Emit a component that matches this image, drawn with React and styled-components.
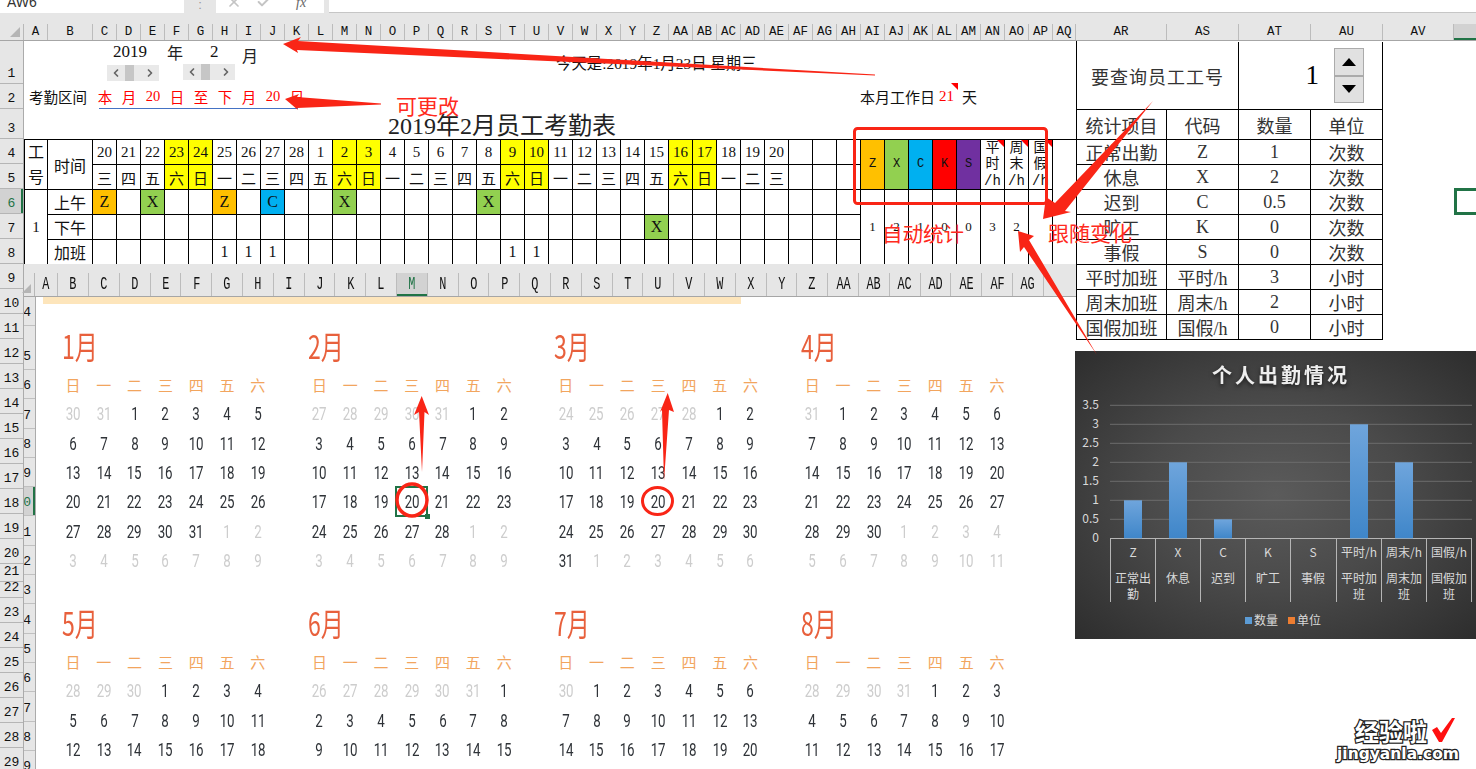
import React from 'react';
import styled, { createGlobalStyle } from 'styled-components';
import { X, Check, ChevronLeft, ChevronRight } from 'lucide-react';

const CJK = '"Noto Sans CJK SC"';
const SONG = `"Liberation Serif", ${CJK}, serif`;
const MONO = `"Liberation Mono", ${CJK}, monospace`;
const RED = '#f92516';
const GREEN = '#217346';

const columnName = (i) => {
  const letter = String.fromCharCode(65 + (i % 26));
  return i < 26 ? letter : 'A' + letter;
};

const WEEK = ['日', '一', '二', '三', '四', '五', '六'];
const DAYS = [20, 21, 22, 23, 24, 25, 26, 27, 28, 1, 2, 3, 4, 5, 6, 7, 8, 9, 10, 11, 12, 13, 14, 15, 16, 17, 18, 19, 20];
const WEEKEND = [3, 4, 10, 11, 17, 18, 24, 25];
const CODE_COLORS = { Z: '#ffc000', X: '#92d050', C: '#00b0f0' };

const SHIFTS = [
  { name: '上午', marks: { 0: 'Z', 2: 'X', 5: 'Z', 7: 'C', 10: 'X', 16: 'X' } },
  { name: '下午', marks: { 23: 'X' } },
  { name: '加班', marks: { 5: 1, 6: 1, 7: 1, 17: 1, 18: 1 } },
];

const SUMMARY = [
  { code: 'Z', bg: '#ffc000', value: 1 },
  { code: 'X', bg: '#92d050', value: 2 },
  { code: 'C', bg: '#00b0f0', value: 1 },
  { code: 'K', bg: '#ff0000', value: 0 },
  { code: 'S', bg: '#7030a0', value: 0 },
  { code: '平时/h', value: 3 },
  { code: '周末/h', value: 2 },
  { code: '国假/h', value: '' },
];

const STATS = [
  ['正常出勤', 'Z', '1', '次数'],
  ['休息', 'X', '2', '次数'],
  ['迟到', 'C', '0.5', '次数'],
  ['旷工', 'K', '0', '次数'],
  ['事假', 'S', '0', '次数'],
  ['平时加班', '平时/h', '3', '小时'],
  ['周末加班', '周末/h', '2', '小时'],
  ['国假加班', '国假/h', '0', '小时'],
];

const TOP_ROWS = [
  [1, 43], [2, 25], [3, 30], [4, 25], [5, 25], [6, 25], [7, 25], [8, 25], [9, 25], [10, 25],
  [11, 25], [12, 25], [13, 25], [14, 25], [15, 25], [16, 25], [17, 25], [18, 25], [19, 25], [20, 25],
  [21, 18], [22, 16], [23, 25], [24, 25], [25, 25], [26, 25], [27, 25], [28, 25], [29, 25],
];

const PANE_ROWS = [[14, 29], [15, 44], ...Array.from({ length: 14 }, (_, i) => [16 + i, 29.3])];

const CHART = [
  { code: 'Z', label: ['正常出', '勤'], value: 1, left: 35 },
  { code: 'X', label: ['休息'], value: 2, left: 80 },
  { code: 'C', label: ['迟到'], value: 0.5, left: 125 },
  { code: 'K', label: ['旷工'], value: 0, left: 170 },
  { code: 'S', label: ['事假'], value: 0, left: 215 },
  { code: '平时/h', label: ['平时加', '班'], value: 3, left: 261 },
  { code: '周末/h', label: ['周末加', '班'], value: 2, left: 306 },
  { code: '国假/h', label: ['国假加', '班'], value: 0, left: 351 },
];

const monthCells = (month) => {
  const first = new Date(2019, month, 1);
  const start = 1 - first.getDay();
  return Array.from({ length: 42 }, (_, i) => {
    const d = new Date(2019, month, start + i);
    return { day: d.getDate(), muted: d.getMonth() !== month };
  });
};

const GlobalStyle = createGlobalStyle`
  html, body { margin: 0; padding: 0; background: #fff; }
  * { box-sizing: border-box; }
`;

const Page = styled.div`
  position: relative;
  width: 1476px;
  height: 769px;
  overflow: hidden;
  background: #fff;
  color: #111;
  font-family: ${SONG};
`;

const FormulaBar = styled.div`
  display: flex;
  height: 24px;
  padding-bottom: 11px;
  background: #e6e6e6;
`;

const NameBox = styled.div`
  width: 184px;
  background: #fff;
  overflow: hidden;
  padding-left: 7px;
  font: 14px/4px "Liberation Sans", sans-serif;
  color: #333;
`;

const BarDots = styled.div`
  width: 32px;
  text-align: center;
  color: #999;
  font: 13px/10px "Liberation Sans", sans-serif;
`;

const IconBox = styled.div`
  display: flex;
  align-items: flex-start;
  width: 108px;
  background: #fff;
  overflow: hidden;
  padding-left: 10px;
  gap: 14px;
  color: #c4c4c4;
  svg {
    margin-top: -6px;
  }
`;

const FxMark = styled.span`
  margin-left: 10px;
  font: italic 14px/6px "Liberation Serif", serif;
  color: #666;
`;

const FormulaInput = styled.div`
  flex: 1;
  margin-left: 5px;
  background: #fff;
  border-bottom: 1px solid #c6c6c6;
`;

const HeaderRow = styled.div`
  display: flex;
  height: 17px;
  background: #e6e6e6;
  border-bottom: 1px solid #a6a6a6;
`;

const Corner = styled.div`
  position: relative;
  flex: 0 0 ${(p) => p.$width}px;
  border-right: 1px solid #b8b8b8;
  &::after {
    content: '';
    position: absolute;
    right: 3px;
    bottom: 3px;
    border-style: solid;
    border-width: 0 0 ${(p) => p.$size}px ${(p) => p.$size}px;
    border-color: transparent transparent #b5b5b5 transparent;
  }
`;

const ColumnHead = styled.div`
  flex: 0 0 ${(p) => p.$width}px;
  display: flex;
  align-items: center;
  justify-content: center;
  border-right: 1px solid #bcbcbc;
  background: ${(p) => (p.$active ? '#d2d2d2' : 'transparent')};
  box-shadow: ${(p) => (p.$active ? `inset 0 -2px 0 ${GREEN}` : 'none')};
  font: 12.5px ${MONO};
  color: #111;
`;

const Body = styled.div`
  display: flex;
  height: 728px;
`;

const RowHeader = styled.div`
  flex: 0 0 24px;
  background: #e6e6e6;
  border-right: 1px solid #ababab;
`;

const RowHead = styled.div`
  display: flex;
  align-items: flex-end;
  justify-content: center;
  height: ${(p) => p.$height}px;
  padding-bottom: 1px;
  border-bottom: 1px solid #b5b5b5;
  background: ${(p) => (p.$active ? '#d2d2d2' : 'transparent')};
  box-shadow: ${(p) => (p.$active ? `inset -2px 0 0 ${GREEN}` : 'none')};
  color: ${(p) => (p.$active ? GREEN : '#111')};
  font: 13px/16px ${MONO};
`;

const SheetColumn = styled.div`
  flex: 0 0 1052px;
  display: flex;
  flex-direction: column;
`;

const TitleRow = styled.div`
  display: flex;
  align-items: flex-start;
  height: 43px;
  padding-left: 83px;
`;

const ScrollGroup = styled.div`
  display: flex;
  flex-direction: column;
  width: 52px;
`;

const ScrollValue = styled.div`
  height: 22px;
  padding-left: ${(p) => p.$indent}px;
  font: 17px/22px "Liberation Serif", serif;
`;

const ScrollControl = styled.div`
  display: flex;
  align-items: center;
  height: 16px;
  margin-top: ${(p) => p.$top}px;
  background: #e9e9e9;
  color: #666;
`;

const ScrollArrow = styled.div`
  flex: 0 0 18px;
  display: flex;
  align-items: center;
  justify-content: center;
`;

const ScrollThumb = styled.div`
  flex: 0 0 9px;
  height: 16px;
  background: #c6c6c6;
`;

const ScrollGap = styled.div`
  flex: 1;
`;

const UnitLabel = styled.div`
  margin: ${(p) => p.$top}px 0 0 ${(p) => p.$left}px;
  font: 16px/22px ${CJK};
  color: #222;
`;

const TodayText = styled.div`
  margin: 13px 0 0 298px;
  white-space: nowrap;
  font: 15.4px/20px ${SONG};
`;

const PeriodRow = styled.div`
  display: flex;
  align-items: center;
  height: 25px;
  padding-left: 5px;
  font-size: 14.5px;
`;

const PeriodLabel = styled.div`
  flex: 0 0 64px;
  white-space: nowrap;
`;

const PeriodDates = styled.div`
  position: relative;
  flex: 0 0 216px;
  display: grid;
  grid-template-columns: repeat(9, 24px);
  height: 25px;
  align-items: center;
  text-align: center;
  color: #ff0000;
  &::after {
    content: '';
    position: absolute;
    left: 6px;
    bottom: 0;
    width: 199px;
    height: 1px;
    background: #4472c4;
  }
`;

const WorkDays = styled.div`
  display: flex;
  align-items: center;
  margin-left: 551px;
  white-space: nowrap;
  font-size: 15px;
`;

const WorkCount = styled.span`
  position: relative;
  width: 27px;
  padding-left: 4px;
  color: #ff0000;
  &::after {
    content: '';
    position: absolute;
    right: 4px;
    top: -5px;
    border-style: solid;
    border-width: 0 7px 7px 0;
    border-color: transparent #ff0000 transparent transparent;
  }
`;

const SheetTitle = styled.div`
  height: 30px;
  padding: 3px 0 0 364px;
  white-space: nowrap;
  font: 24px/28px ${SONG};
  color: #222;
`;

const Attendance = styled.div`
  display: grid;
  grid-template-columns: 23px 45px repeat(40, 24px);
  grid-auto-rows: 25px;
  height: 125px;
  overflow: hidden;
  border-top: 1px solid #000;
  border-left: 1px solid #000;
`;

const Cell = styled.div`
  position: relative;
  display: flex;
  align-items: center;
  justify-content: center;
  grid-row: span ${(p) => p.$rows || 1};
  min-width: 0;
  overflow: hidden;
  text-align: center;
  border-right: 1px solid #000;
  border-bottom: 1px solid #000;
  background: ${(p) => p.$bg || 'transparent'};
  font-size: ${(p) => p.$size || 15}px;
  line-height: ${(p) => p.$line || 'normal'};
`;

const StackedText = styled.span`
  width: 1em;
`;

const SummaryLines = styled.span`
  white-space: nowrap;
`;

const SummaryHead = styled(Cell)`
  font-family: ${MONO};
  &::after {
    content: '';
    display: ${(p) => (p.$note ? 'block' : 'none')};
    position: absolute;
    top: 0;
    right: 0;
    border-style: solid;
    border-width: 0 7px 7px 0;
    border-color: transparent #ff0000 transparent transparent;
  }
`;

const PastedPane = styled.div`
  flex: 1;
  display: flex;
  flex-direction: column;
  min-height: 0;
`;

const PaneHeader = styled.div`
  display: flex;
  align-items: stretch;
  height: 33px;
  padding-top: 9px;
  background: #e6e6e6;
  border-bottom: 1px solid #a6a6a6;
`;

const PaneColumn = styled.div`
  flex: 0 0 ${(p) => p.$width}px;
  display: flex;
  align-items: center;
  justify-content: center;
  border-right: 1px solid #bcbcbc;
  background: ${(p) => (p.$active ? '#d2d2d2' : 'transparent')};
  box-shadow: ${(p) => (p.$active ? `inset 0 -2px 0 ${GREEN}` : 'none')};
  color: ${(p) => (p.$active ? GREEN : '#111')};
  font: 12.5px ${MONO};
`;

const StretchedLetter = styled.span`
  display: inline-block;
  transform: scale(0.95, 1.4);
`;

const PaneBody = styled.div`
  flex: 1;
  display: flex;
  min-height: 0;
`;

const PaneRows = styled.div`
  flex: 0 0 12px;
  width: 12px;
  min-width: 0;
  background: #e6e6e6;
  border-right: 1px solid #ababab;
`;

const PaneRow = styled.div`
  display: flex;
  align-items: flex-end;
  justify-content: flex-end;
  overflow: hidden;
  height: ${(p) => p.$height}px;
  padding: 0 4px 2px 0;
  border-bottom: 1px solid #c0c0c0;
  background: ${(p) => (p.$active ? '#d2d2d2' : 'transparent')};
  box-shadow: ${(p) => (p.$active ? `inset -2px 0 0 ${GREEN}` : 'none')};
  color: ${(p) => (p.$active ? GREEN : '#111')};
  font: 13px/20px ${MONO};
`;

const CalendarArea = styled.div`
  flex: 1;
  display: flex;
  flex-direction: column;
  min-width: 0;
`;

const Band = styled.div`
  flex: 0 0 7px;
  width: 698px;
  margin-left: 7px;
  background: #fde5bb;
`;

const Months = styled.div`
  display: grid;
  grid-template-columns: repeat(4, 246.4px);
  grid-auto-rows: 277px;
  padding-left: 21.6px;
`;

const MonthTitle = styled.div`
  height: 60px;
  padding: 24px 0 0 4px;
`;

const MonthName = styled.span`
  display: inline-block;
  transform: scaleX(0.72);
  transform-origin: left center;
  font: 400 32px/34px ${CJK};
  color: #e8603c;
`;

const DayGrid = styled.div`
  display: grid;
  grid-template-columns: repeat(7, 30.8px);
  grid-auto-rows: 29.3px;
  margin-top: 6px;
`;

const WeekName = styled.div`
  display: flex;
  align-items: center;
  justify-content: center;
  font: 15px ${CJK};
  color: #f2a55e;
`;

const DayNumber = styled.div`
  display: flex;
  align-items: center;
  justify-content: center;
  font: 18px Roboto, sans-serif;
  color: ${(p) => (p.$muted ? '#cdcdcd' : '#2f3338')};
  span {
    transform: scaleX(0.74);
  }
`;

const RightPanel = styled.div`
  flex: 1;
  display: flex;
  flex-direction: column;
  min-width: 0;
`;

const StatsTable = styled.div`
  display: grid;
  grid-template-columns: 90px 72px 72px 72px;
  grid-template-rows: 68px 30px repeat(8, 25px);
  width: 307px;
  padding-top: 1px;
  border-left: 1px solid #000;
  color: #333;
`;

const LookupLabel = styled.div`
  grid-column: span 2;
  display: flex;
  align-items: center;
  justify-content: center;
  border-right: 1px solid #000;
  border-bottom: 1px solid #000;
  font: 18px ${CJK};
  letter-spacing: 1px;
`;

const LookupValue = styled.div`
  grid-column: span 2;
  display: flex;
  align-items: center;
  justify-content: flex-end;
  gap: 15px;
  padding-right: 18px;
  border-right: 1px solid #000;
  border-bottom: 1px solid #000;
  color: #000;
  font: 27px "Liberation Serif", serif;
`;

const Spinner = styled.div`
  display: flex;
  flex-direction: column;
  width: 30px;
`;

const SpinButton = styled.div`
  display: flex;
  align-items: center;
  justify-content: center;
  height: 27.5px;
  background: #e1e1e1;
  border: 1px solid #ababab;
`;

const StatsCell = styled.div`
  display: flex;
  align-items: center;
  justify-content: center;
  white-space: nowrap;
  border-right: 1px solid #000;
  border-bottom: 1px solid #000;
  font: 18px ${SONG};
`;

const ChartBox = styled.div`
  flex: 0 0 288px;
  width: 401px;
  margin: 11px 0 0 -1px;
  background: radial-gradient(ellipse at center, #5b5b5b 0%, #4a4a4a 45%, #2d2d2d 100%);
  svg {
    display: block;
    font-family: ${CJK}, sans-serif;
  }
`;

const ChartTitle = styled.text`
  font-size: 20px;
  font-weight: 700;
  letter-spacing: 3px;
  fill: #eeeeee;
  filter: drop-shadow(0 2px 2px rgba(0, 0, 0, 0.6));
`;

const AxisText = styled.text`
  font-size: 12px;
  fill: #d9d9d9;
`;

const Overlay = styled.svg`
  position: absolute;
  inset: 0;
  pointer-events: none;
`;

const Note = styled.div`
  position: absolute;
  left: ${(p) => p.$x}px;
  top: ${(p) => p.$y}px;
  white-space: nowrap;
  font: ${(p) => p.$size}px/1 ${CJK};
  color: #ff2a20;
`;

const SelectionBox = styled.div`
  position: absolute;
  left: ${(p) => p.$x}px;
  top: ${(p) => p.$y}px;
  width: ${(p) => p.$w}px;
  height: ${(p) => p.$h}px;
  border: ${(p) => p.$line}px solid ${GREEN};
`;

const FillHandle = styled.div`
  position: absolute;
  right: -4px;
  bottom: -4px;
  width: 5px;
  height: 5px;
  background: ${GREEN};
`;

const Watermark = styled.div`
  position: absolute;
  left: 1337px;
  top: 717px;
  width: 126px;
  color: #fff;
  -webkit-text-stroke: 2.5px #222;
  paint-order: stroke fill;
`;

const WatermarkCn = styled.div`
  padding-left: 18px;
  font: 700 24px/28px ${CJK};
  letter-spacing: 0;
`;

const WatermarkEn = styled.div`
  font: 700 15.5px/18px "DejaVu Sans", sans-serif;
  white-space: nowrap;
`;

const WatermarkCheck = styled.svg`
  position: absolute;
  left: 94px;
  top: 0;
`;

function ColumnHeaders() {
  const names = Array.from({ length: 43 }, (_, i) => columnName(i));
  return (
    <HeaderRow>
      <Corner $width={24} $size={10} />
      {names.map((name, i) => (
        <ColumnHead key={name} $width={i === 1 ? 45 : i === 42 ? 23 : 24}>{name}</ColumnHead>
      ))}
      <ColumnHead $width={91}>AR</ColumnHead>
      <ColumnHead $width={72}>AS</ColumnHead>
      <ColumnHead $width={72}>AT</ColumnHead>
      <ColumnHead $width={72}>AU</ColumnHead>
      <ColumnHead $width={71}>AV</ColumnHead>
      <ColumnHead $width={24} $active />
    </HeaderRow>
  );
}

function ScrollBar({ top }) {
  return (
    <ScrollControl $top={top}>
      <ScrollArrow><ChevronLeft size={12} strokeWidth={3.5} /></ScrollArrow>
      <ScrollThumb />
      <ScrollGap />
      <ScrollArrow><ChevronRight size={12} strokeWidth={3.5} /></ScrollArrow>
    </ScrollControl>
  );
}

function AttendanceTable() {
  return (
    <Attendance>
      <Cell $rows={2} $size={16} $line="25px"><StackedText>工号</StackedText></Cell>
      <Cell $rows={2} $size={16}>时间</Cell>
      {DAYS.map((d, i) => (
        <Cell key={i} $bg={WEEKEND.includes(i) ? '#ffff00' : ''} $size={15}>{d}</Cell>
      ))}
      <Cell /><Cell /><Cell />
      {SUMMARY.map((s) => (
        <SummaryHead key={s.code} $rows={2} $bg={s.bg} $note={!s.bg} $size={s.bg ? 12 : 14} $line="16.5px">
          {s.bg ? s.code : (
            <SummaryLines>{s.code[0]}<br />{s.code[1]}<br />/h</SummaryLines>
          )}
        </SummaryHead>
      ))}
      {DAYS.map((d, i) => (
        <Cell key={i} $bg={WEEKEND.includes(i) ? '#ffff00' : ''} $size={15}>{WEEK[(i + 3) % 7]}</Cell>
      ))}
      <Cell /><Cell /><Cell />
      <Cell $rows={3} $size={15}>1</Cell>
      <Cell $size={16}>{SHIFTS[0].name}</Cell>
      {Array.from({ length: 32 }, (_, i) => (
        <Cell key={i} $bg={CODE_COLORS[SHIFTS[0].marks[i]]} $size={16}>{SHIFTS[0].marks[i]}</Cell>
      ))}
      {SUMMARY.map((s) => (
        <Cell key={s.code} $rows={3} $size={13}>{s.value}</Cell>
      ))}
      {SHIFTS.slice(1).map((shift) => (
        <React.Fragment key={shift.name}>
          <Cell $size={16}>{shift.name}</Cell>
          {Array.from({ length: 32 }, (_, i) => (
            <Cell key={i} $bg={CODE_COLORS[shift.marks[i]]} $size={16}>{shift.marks[i]}</Cell>
          ))}
        </React.Fragment>
      ))}
    </Attendance>
  );
}

function Month({ month }) {
  return (
    <div>
      <MonthTitle><MonthName>{month + 1}月</MonthName></MonthTitle>
      <DayGrid>
        {WEEK.map((w) => <WeekName key={w}>{w}</WeekName>)}
        {monthCells(month).map((c, i) => (
          <DayNumber key={i} $muted={c.muted}><span>{c.day}</span></DayNumber>
        ))}
      </DayGrid>
    </div>
  );
}

function PastedCalendar() {
  const names = Array.from({ length: 33 }, (_, i) => columnName(i));
  return (
    <PastedPane>
      <PaneHeader>
        <Corner $width={11} $size={9} />
        {names.map((name, i) => (
          <PaneColumn key={name} $width={i === 0 ? 23 : i === 1 ? 31 : 30.8} $active={name === 'M'}>
            <StretchedLetter>{name}</StretchedLetter>
          </PaneColumn>
        ))}
      </PaneHeader>
      <PaneBody>
        <PaneRows>
          {PANE_ROWS.map(([n, h]) => (
            <PaneRow key={n} $height={h} $active={n === 20}>{n}</PaneRow>
          ))}
        </PaneRows>
        <CalendarArea>
          <Band />
          <Months>
            {Array.from({ length: 8 }, (_, i) => <Month key={i} month={i} />)}
          </Months>
        </CalendarArea>
      </PaneBody>
    </PastedPane>
  );
}

function StatsPanel() {
  return (
    <StatsTable>
      <LookupLabel>要查询员工工号</LookupLabel>
      <LookupValue>
        1
        <Spinner>
          <SpinButton><svg width="14" height="8"><polygon points="7,0 14,8 0,8" fill="#000" /></svg></SpinButton>
          <SpinButton><svg width="14" height="8"><polygon points="0,0 14,0 7,8" fill="#000" /></svg></SpinButton>
        </Spinner>
      </LookupValue>
      {['统计项目', '代码', '数量', '单位'].map((t) => <StatsCell key={t}>{t}</StatsCell>)}
      {STATS.map((row) => row.map((text, i) => (
        <StatsCell key={row[0] + i}>{text}</StatsCell>
      )))}
    </StatsTable>
  );
}

function AttendanceChart() {
  const ticks = ['3.5', '3', '2.5', '2', '1.5', '1', '0.5', '0'];
  const y = (v) => 187.3 - v * 38;
  return (
    <ChartBox>
      <svg width="401" height="288" viewBox="0 0 401 288">
        <defs>
          <linearGradient id="barFill" x1="0" y1="0" x2="0" y2="1">
            <stop offset="0" stopColor="#6fa5dc" />
            <stop offset="1" stopColor="#3f86c9" />
          </linearGradient>
        </defs>
        <ChartTitle x="206" y="32" textAnchor="middle">个人出勤情况</ChartTitle>
        {ticks.map((t) => (
          <React.Fragment key={t}>
            {t !== '0' && <line x1="35" x2="397" y1={y(+t)} y2={y(+t)} stroke="#6c6c6c" />}
            <AxisText x="24" y={y(+t) + 4} textAnchor="end">{t}</AxisText>
          </React.Fragment>
        ))}
        <line x1="35" x2="397" y1="187.5" y2="187.5" stroke="#b5b5b5" />
        {CHART.map((c) => (
          <React.Fragment key={c.code}>
            {c.value > 0 && (
              <rect x={c.left + 14} y={y(c.value)} width="18" height={c.value * 38} fill="url(#barFill)" />
            )}
            <line x1={c.left + 0.5} x2={c.left + 0.5} y1="187" y2="251" stroke="#b5b5b5" />
            <AxisText x={c.left + 23} y="206" textAnchor="middle">{c.code}</AxisText>
            {c.label.map((text, i) => (
              <AxisText key={text} x={c.left + 23} y={232 + i * 16} textAnchor="middle">{text}</AxisText>
            ))}
          </React.Fragment>
        ))}
        <line x1="396.5" x2="396.5" y1="187" y2="251" stroke="#b5b5b5" />
        <rect x="170" y="266" width="7" height="7" fill="#5b9bd5" />
        <AxisText x="179" y="274">数量</AxisText>
        <rect x="213" y="266" width="7" height="7" fill="#ed7d31" />
        <AxisText x="222" y="274">单位</AxisText>
      </svg>
    </ChartBox>
  );
}

function Annotations() {
  return (
    <>
      <SelectionBox $x={1454} $y={188} $w={26} $h={27} $line={3} />
      <SelectionBox $x={395} $y={486} $w={33} $h={31} $line={2}><FillHandle /></SelectionBox>
      <Overlay width="1476" height="769">
        <g fill={RED}>
          <polygon points="283,44 301,37 298,41 875,74.5 875,75.5 297,50 298,53" />
          <polygon points="285,99 299,94 297,97 381,103.5 381,104.5 297,108 298,110" />
          <polygon points="1043,219 1046,197 1055,203 1153,101 1065,211 1071,212" />
          <polygon points="1018,231 1034,236 1029,240 1097,355 1024,247 1020,252" />
          <polygon points="421.7,396 429,415 424.5,412 422,472 419,412 414,415" />
          <polygon points="667.7,393 674,412 669,410 664,481 662,410 660,412" />
        </g>
        <rect x="854.5" y="128.5" width="192" height="75" rx="3" fill="none" stroke={RED} strokeWidth="3" />
        <ellipse cx="412" cy="500" rx="15" ry="16" fill="none" stroke={RED} strokeWidth="3.5" />
        <ellipse cx="657.5" cy="501" rx="15" ry="13.5" fill="none" stroke={RED} strokeWidth="3" />
      </Overlay>
      <Note $x={396} $y={95} $size={21}>可更改</Note>
      <Note $x={882} $y={223} $size={20.5}>自动统计</Note>
      <Note $x={1048} $y={222} $size={21}>跟随变化</Note>
      <Watermark>
        <WatermarkCn>经验啦</WatermarkCn>
        <WatermarkEn>jingyanla.com</WatermarkEn>
        <WatermarkCheck width="26" height="26" viewBox="0 0 26 26">
          <path d="M1 13 L6 10 L10 16 L21 1 L24 1 L11 25 L8 25 Z" fill="#ff1010" stroke="none" />
        </WatermarkCheck>
      </Watermark>
    </>
  );
}

export default function App() {
  return (
    <Page>
      <GlobalStyle />
      <FormulaBar>
        <NameBox>AW6</NameBox>
        <BarDots>:</BarDots>
        <IconBox>
          <X size={16} strokeWidth={2.5} />
          <Check size={16} strokeWidth={3} />
          <FxMark>fx</FxMark>
        </IconBox>
        <FormulaInput />
      </FormulaBar>
      <ColumnHeaders />
      <Body>
        <RowHeader>
          {TOP_ROWS.map(([n, h]) => (
            <RowHead key={n} $height={h} $active={n === 6}>{n}</RowHead>
          ))}
        </RowHeader>
        <SheetColumn>
          <TitleRow>
            <ScrollGroup>
              <ScrollValue $indent={6}>2019</ScrollValue>
              <ScrollBar top={2} />
            </ScrollGroup>
            <UnitLabel $top={0} $left={8}>年</UnitLabel>
            <ScrollGroup>
              <ScrollValue $indent={27}>2</ScrollValue>
              <ScrollBar top={1} />
            </ScrollGroup>
            <UnitLabel $top={3} $left={7}>月</UnitLabel>
            <TodayText>今天是:2019年1月23日 星期三</TodayText>
          </TitleRow>
          <PeriodRow>
            <PeriodLabel>考勤区间</PeriodLabel>
            <PeriodDates>
              {['本', '月', '20', '日', '至', '下', '月', '20', '日'].map((t, i) => <span key={i}>{t}</span>)}
            </PeriodDates>
            <WorkDays>
              本月工作日
              <WorkCount>21</WorkCount>
              天
            </WorkDays>
          </PeriodRow>
          <SheetTitle>2019年2月员工考勤表</SheetTitle>
          <AttendanceTable />
          <PastedCalendar />
        </SheetColumn>
        <RightPanel>
          <StatsPanel />
          <AttendanceChart />
        </RightPanel>
      </Body>
      <Annotations />
    </Page>
  );
}
